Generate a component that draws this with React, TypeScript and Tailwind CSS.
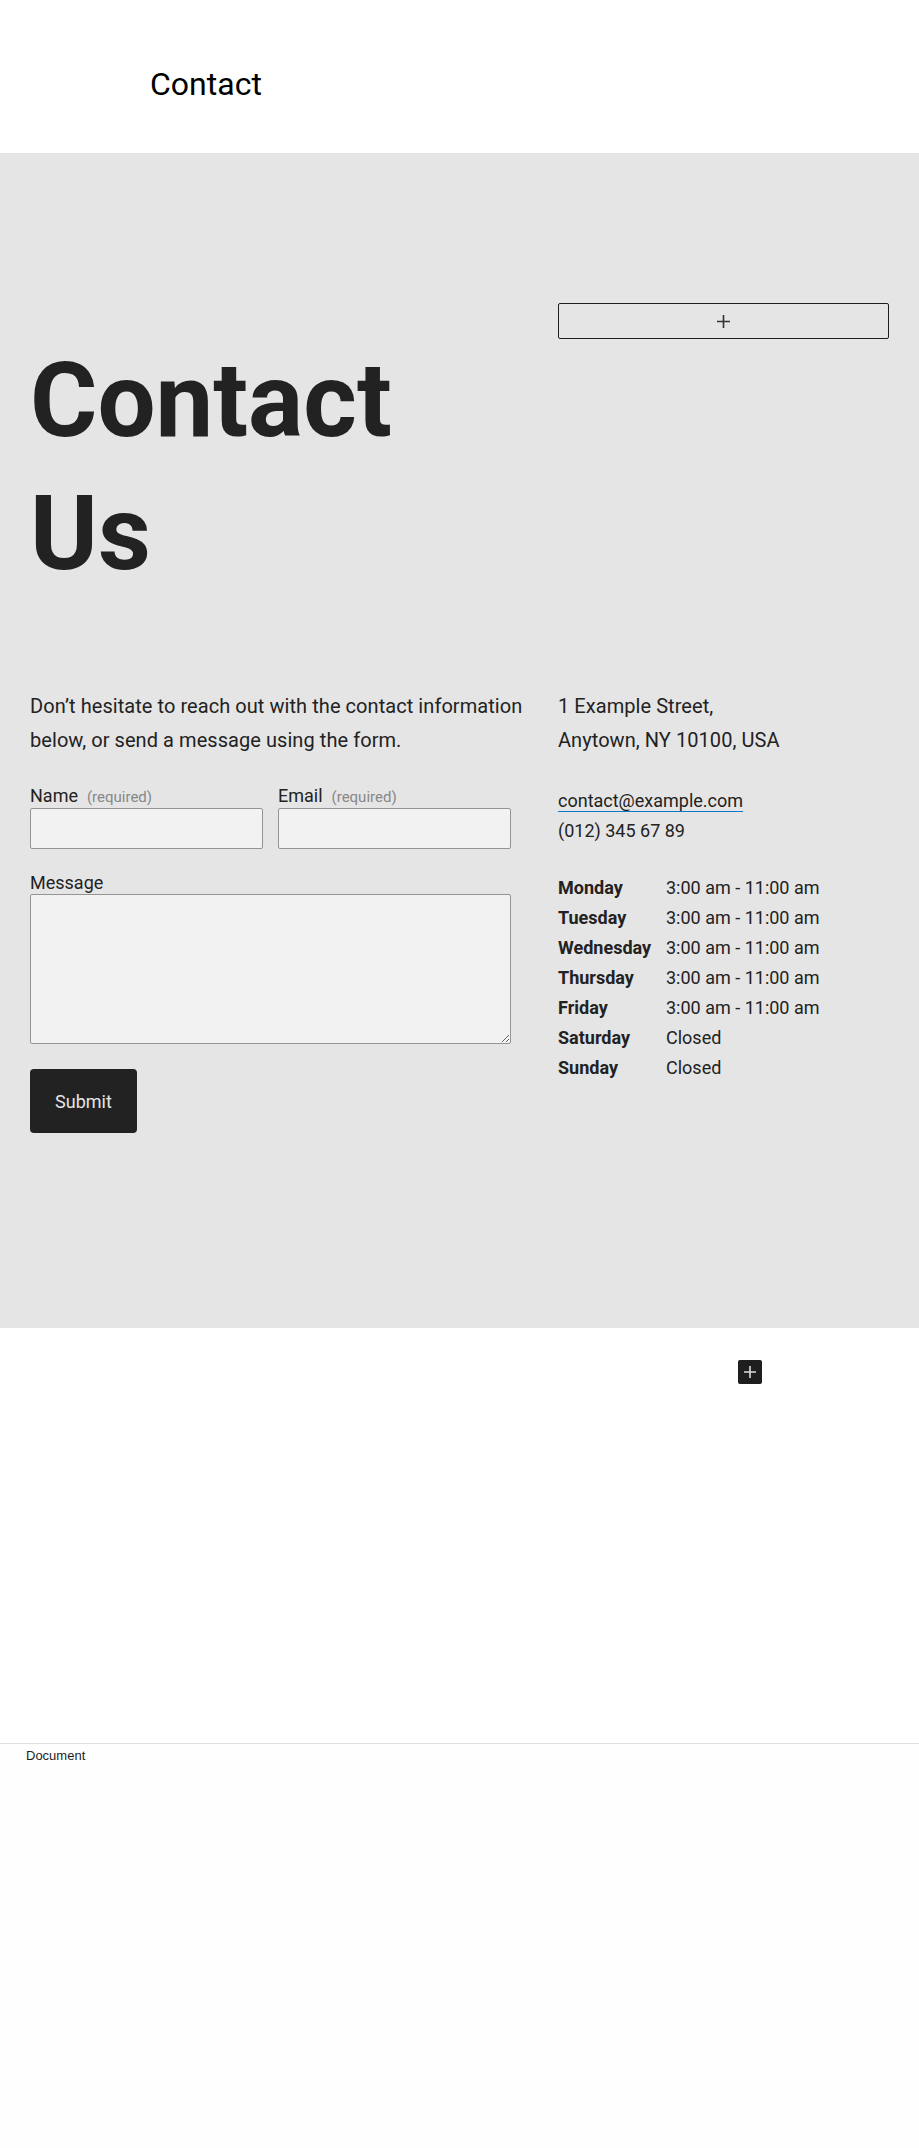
import React from "react";

const hours: [string, string][] = [
  ["Monday", "3:00 am - 11:00 am"],
  ["Tuesday", "3:00 am - 11:00 am"],
  ["Wednesday", "3:00 am - 11:00 am"],
  ["Thursday", "3:00 am - 11:00 am"],
  ["Friday", "3:00 am - 11:00 am"],
  ["Saturday", "Closed"],
  ["Sunday", "Closed"],
];

function Plus({ size, color, stroke }: { size: number; color: string; stroke: number }) {
  return (
    <svg width={size} height={size} viewBox="0 0 12 12" fill="none">
      <path d="M6 0v12M0 6h12" stroke={color} strokeWidth={stroke} />
    </svg>
  );
}

export default function App() {
  return (
    <div className="font-['Roboto',sans-serif] text-[#222] w-[919px]">
      <header className="h-[153px] bg-white pl-[150px] pt-[65px]">
        <div className="text-[32px] leading-[38px] text-black">Contact</div>
      </header>

      <section className="bg-[#e5e5e5] px-[30px] pt-[150px] pb-[195px]">
        <div className="flex gap-[28px]">
          <div className="w-[500px] shrink-0">
            <h1 className="mt-[31px] text-[103px] leading-[133px] font-bold text-[#222]">Contact Us</h1>
          </div>
          <div className="flex-1">
            <button className="flex h-[36px] w-full items-center justify-center rounded-[2px] border border-[#1e1e1e]">
              <Plus size={13} color="#333" stroke={1.5} />
            </button>
          </div>
        </div>

        <div className="mt-[89px] flex gap-[28px]">
          <div className="w-[500px] shrink-0">
            <p className="text-[20px] leading-[34px] tracking-[0.06px]">
              Don’t hesitate to reach out with the contact information below, or send a message using the form.
            </p>
            <form className="mt-[28px] w-[481px]">
              <div className="grid grid-cols-2 gap-x-[15px]">
                <div>
                  <label className="block text-[18px] leading-[22px]">
                    Name<span className="ml-[9px] text-[15px] text-[#888]">(required)</span>
                  </label>
                  <input className="block h-[41px] w-full rounded-[2px] border border-[#949494] bg-[#f2f2f2]" />
                </div>
                <div>
                  <label className="block text-[18px] leading-[22px]">
                    Email<span className="ml-[9px] text-[15px] text-[#888]">(required)</span>
                  </label>
                  <input className="block h-[41px] w-full rounded-[2px] border border-[#949494] bg-[#f2f2f2]" />
                </div>
              </div>
              <label className="mt-[23px] block text-[18px] leading-[22px]">Message</label>
              <textarea className="block h-[150px] w-full rounded-[2px] border border-[#949494] bg-[#f2f2f2]" />
              <button
                type="button"
                className="mt-[25px] h-[64px] w-[107px] rounded-[4px] bg-[#222] text-[18px] text-[#e5e5e5]"
              >
                Submit
              </button>
            </form>
          </div>

          <div className="flex-1">
            <p className="text-[20px] leading-[34px] tracking-[0.06px]">
              1 Example Street,
              <br />
              Anytown, NY 10100, USA
            </p>
            <div className="mt-[29px] text-[18px] leading-[30px]">
              <div>
                <span className="underline decoration-[#0a7ac4] decoration-1 underline-offset-[4px]">contact@example.com</span>
              </div>
              <div>(012) 345 67 89</div>
            </div>
            <div className="mt-[26px] text-[18px]">
              {hours.map(([d, t]) => (
                <div key={d} className="flex h-[30px] items-center">
                  <span className="w-[108px] font-bold">{d}</span>
                  <span>{t}</span>
                </div>
              ))}
            </div>
          </div>
        </div>
      </section>

      <section className="h-[415px] bg-white pt-[32px]">
        <div className="ml-[738px] flex h-[24px] w-[24px] items-center justify-center rounded-[2px] bg-[#1e1e1e]">
          <Plus size={12} color="#ddd" stroke={1.6} />
        </div>
      </section>

      <footer className="h-[405px] border-t border-[#e0e0e0] bg-[#fefefe] pl-[26px] pt-[4px]">
        <div className="font-['Liberation_Sans',sans-serif] text-[13px] leading-[16px] text-[#1e1e1e]">Document</div>
      </footer>
    </div>
  );
}
